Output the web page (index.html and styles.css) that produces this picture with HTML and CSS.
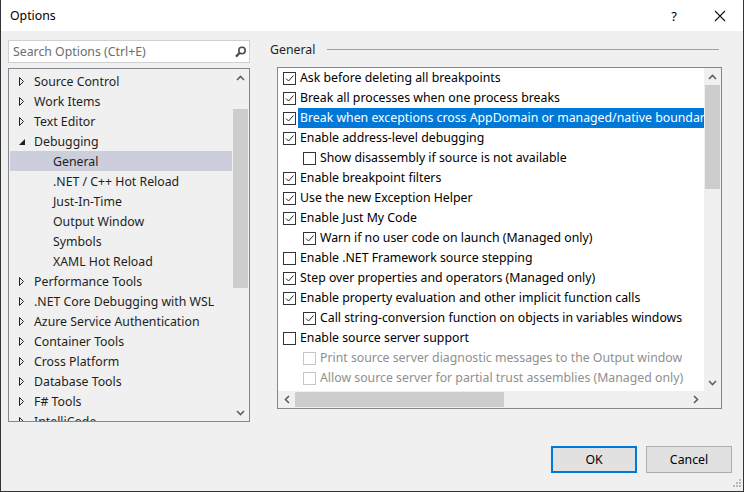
FILE: index.html
```html
<!DOCTYPE html>
<html lang="en">

<head>
    <meta charset="UTF-8">
    <title>Options</title>
    <link rel="stylesheet" href="styles.css">
</head>

<body>
    <div class="window">
        <div class="titlebar">
            <span class="title">Options</span>
            <div class="caption">
                <span class="help">?</span>
                <svg class="close" width="12" height="12" viewBox="0 0 12 12">
                    <path d="M1 1L11 11M11 1L1 11" stroke="#111" stroke-width="1.1" fill="none" />
                </svg>
            </div>
        </div>

        <div class="content">
            <div class="main">
                <div class="left">
                    <div class="search">
                        <span class="placeholder">Search Options (Ctrl+E)</span>
                        <svg width="14" height="12" viewBox="0 0 14 12">
                            <circle cx="9" cy="4.5" r="3.2" stroke="#4a4a4a" stroke-width="1.6" fill="none" />
                            <path d="M6.8 6.8L3 10.6" stroke="#4a4a4a" stroke-width="2.2" fill="none" />
                        </svg>
                    </div>
                    <div class="tree">
                        <div class="tree-items">
                            <div class="node"><span class="arrow"><svg width="6" height="9"><path d="M0.5 0.5L4.5 4.5L0.5 8.5Z" stroke="#1e1e1e" fill="none" /></svg></span>Source Control</div>
                            <div class="node"><span class="arrow"><svg width="6" height="9"><path d="M0.5 0.5L4.5 4.5L0.5 8.5Z" stroke="#1e1e1e" fill="none" /></svg></span>Work Items</div>
                            <div class="node"><span class="arrow"><svg width="6" height="9"><path d="M0.5 0.5L4.5 4.5L0.5 8.5Z" stroke="#1e1e1e" fill="none" /></svg></span>Text Editor</div>
                            <div class="node"><span class="arrow"><svg width="6" height="9"><path d="M6 2L6 8L0 8Z" fill="#1e1e1e" /></svg></span>Debugging</div>
                            <div class="node child selected">General</div>
                            <div class="node child">.NET / C++ Hot Reload</div>
                            <div class="node child">Just-In-Time</div>
                            <div class="node child">Output Window</div>
                            <div class="node child">Symbols</div>
                            <div class="node child">XAML Hot Reload</div>
                            <div class="node"><span class="arrow"><svg width="6" height="9"><path d="M0.5 0.5L4.5 4.5L0.5 8.5Z" stroke="#1e1e1e" fill="none" /></svg></span>Performance Tools</div>
                            <div class="node"><span class="arrow"><svg width="6" height="9"><path d="M0.5 0.5L4.5 4.5L0.5 8.5Z" stroke="#1e1e1e" fill="none" /></svg></span>.NET Core Debugging with WSL</div>
                            <div class="node"><span class="arrow"><svg width="6" height="9"><path d="M0.5 0.5L4.5 4.5L0.5 8.5Z" stroke="#1e1e1e" fill="none" /></svg></span>Azure Service Authentication</div>
                            <div class="node"><span class="arrow"><svg width="6" height="9"><path d="M0.5 0.5L4.5 4.5L0.5 8.5Z" stroke="#1e1e1e" fill="none" /></svg></span>Container Tools</div>
                            <div class="node"><span class="arrow"><svg width="6" height="9"><path d="M0.5 0.5L4.5 4.5L0.5 8.5Z" stroke="#1e1e1e" fill="none" /></svg></span>Cross Platform</div>
                            <div class="node"><span class="arrow"><svg width="6" height="9"><path d="M0.5 0.5L4.5 4.5L0.5 8.5Z" stroke="#1e1e1e" fill="none" /></svg></span>Database Tools</div>
                            <div class="node"><span class="arrow"><svg width="6" height="9"><path d="M0.5 0.5L4.5 4.5L0.5 8.5Z" stroke="#1e1e1e" fill="none" /></svg></span>F# Tools</div>
                            <div class="node"><span class="arrow"><svg width="6" height="9"><path d="M0.5 0.5L4.5 4.5L0.5 8.5Z" stroke="#1e1e1e" fill="none" /></svg></span>IntelliCode</div>
                        </div>
                        <div class="vscroll tree-scroll">
                            <div class="sb-btn"><svg width="9" height="6"><path d="M1 5L4.5 1.5L8 5" stroke="#606060" stroke-width="1.6" fill="none" /></svg></div>
                            <div class="track"><div class="thumb"></div></div>
                            <div class="sb-btn"><svg width="9" height="6"><path d="M1 1L4.5 4.5L8 1" stroke="#606060" stroke-width="1.6" fill="none" /></svg></div>
                        </div>
                    </div>
                </div>

                <div class="right">
                    <div class="group-title">General</div>
                    <div class="listbox">
                        <div class="list-top">
                            <div class="rows">
                                <div class="row"><span class="cb on"><svg width="11" height="11"><path d="M2 5.5L4.5 8L9.5 2.5" stroke="#222" fill="none" /></svg></span><span class="label">Ask before deleting all breakpoints</span></div>
                                <div class="row"><span class="cb on"><svg width="11" height="11"><path d="M2 5.5L4.5 8L9.5 2.5" stroke="#222" fill="none" /></svg></span><span class="label">Break all processes when one process breaks</span></div>
                                <div class="row"><span class="cb on"><svg width="11" height="11"><path d="M2 5.5L4.5 8L9.5 2.5" stroke="#222" fill="none" /></svg></span><span class="label selected">Break when exceptions cross AppDomain or managed/native boundaries</span></div>
                                <div class="row"><span class="cb on"><svg width="11" height="11"><path d="M2 5.5L4.5 8L9.5 2.5" stroke="#222" fill="none" /></svg></span><span class="label">Enable address-level debugging</span></div>
                                <div class="row sub"><span class="cb"></span><span class="label">Show disassembly if source is not available</span></div>
                                <div class="row"><span class="cb on"><svg width="11" height="11"><path d="M2 5.5L4.5 8L9.5 2.5" stroke="#222" fill="none" /></svg></span><span class="label">Enable breakpoint filters</span></div>
                                <div class="row"><span class="cb on"><svg width="11" height="11"><path d="M2 5.5L4.5 8L9.5 2.5" stroke="#222" fill="none" /></svg></span><span class="label">Use the new Exception Helper</span></div>
                                <div class="row"><span class="cb on"><svg width="11" height="11"><path d="M2 5.5L4.5 8L9.5 2.5" stroke="#222" fill="none" /></svg></span><span class="label">Enable Just My Code</span></div>
                                <div class="row sub"><span class="cb on"><svg width="11" height="11"><path d="M2 5.5L4.5 8L9.5 2.5" stroke="#222" fill="none" /></svg></span><span class="label">Warn if no user code on launch (Managed only)</span></div>
                                <div class="row"><span class="cb"></span><span class="label">Enable .NET Framework source stepping</span></div>
                                <div class="row"><span class="cb on"><svg width="11" height="11"><path d="M2 5.5L4.5 8L9.5 2.5" stroke="#222" fill="none" /></svg></span><span class="label">Step over properties and operators (Managed only)</span></div>
                                <div class="row"><span class="cb on"><svg width="11" height="11"><path d="M2 5.5L4.5 8L9.5 2.5" stroke="#222" fill="none" /></svg></span><span class="label">Enable property evaluation and other implicit function calls</span></div>
                                <div class="row sub"><span class="cb on"><svg width="11" height="11"><path d="M2 5.5L4.5 8L9.5 2.5" stroke="#222" fill="none" /></svg></span><span class="label">Call string-conversion function on objects in variables windows</span></div>
                                <div class="row"><span class="cb"></span><span class="label">Enable source server support</span></div>
                                <div class="row sub disabled"><span class="cb"></span><span class="label">Print source server diagnostic messages to the Output window</span></div>
                                <div class="row sub disabled"><span class="cb"></span><span class="label">Allow source server for partial trust assemblies (Managed only)</span></div>
                            </div>
                            <div class="vscroll list-scroll">
                                <div class="sb-btn"><svg width="9" height="6"><path d="M1 5L4.5 1.5L8 5" stroke="#606060" stroke-width="1.6" fill="none" /></svg></div>
                                <div class="track"><div class="thumb"></div></div>
                                <div class="sb-btn"><svg width="9" height="6"><path d="M1 1L4.5 4.5L8 1" stroke="#606060" stroke-width="1.6" fill="none" /></svg></div>
                            </div>
                        </div>
                        <div class="list-bottom">
                            <div class="hscroll">
                                <div class="sb-btn"><svg width="6" height="9"><path d="M5 1L1.5 4.5L5 8" stroke="#606060" stroke-width="1.6" fill="none" /></svg></div>
                                <div class="track"><div class="thumb"></div></div>
                                <div class="sb-btn"><svg width="6" height="9"><path d="M1 1L4.5 4.5L1 8" stroke="#606060" stroke-width="1.6" fill="none" /></svg></div>
                            </div>
                            <div class="corner"></div>
                        </div>
                    </div>
                </div>
            </div>

            <div class="footer">
                <button class="btn default">OK</button>
                <button class="btn">Cancel</button>
            </div>
        </div>

        <svg class="grip" width="10" height="10" viewBox="0 0 10 10">
            <rect x="8" y="0" width="2" height="2" fill="#b8b8b8" />
            <rect x="5" y="3" width="2" height="2" fill="#b8b8b8" />
            <rect x="8" y="3" width="2" height="2" fill="#b8b8b8" />
            <rect x="2" y="6" width="2" height="2" fill="#b8b8b8" />
            <rect x="5" y="6" width="2" height="2" fill="#b8b8b8" />
            <rect x="8" y="6" width="2" height="2" fill="#b8b8b8" />
        </svg>
    </div>
</body>

</html>
```

FILE: styles.css
```css
* {
    box-sizing: border-box;
}

body {
    margin: 0;
    font-family: "Noto Sans", "Open Sans", sans-serif;
    font-size: 12.3px;
    color: #000;
}

.window {
    position: relative;
    width: 744px;
    height: 492px;
    background: #f0f0f0;
    border: 1px solid #333;
    border-top: none;
    display: flex;
    flex-direction: column;
}

.titlebar {
    height: 31px;
    background: #fff;
    display: flex;
    align-items: center;
    justify-content: space-between;
    padding-left: 9px;
}

.caption {
    display: flex;
    align-items: center;
}

.help {
    font-size: 13px;
    width: 46px;
    text-align: center;
}

.close {
    margin: 0 17px;
}

.content {
    flex: 1;
    display: flex;
    flex-direction: column;
    padding: 9px 0 0 7px;
}

.main {
    display: flex;
    height: 382px;
}

.left {
    width: 242px;
    flex: none;
    display: flex;
    flex-direction: column;
    gap: 5px;
}

.search {
    height: 23px;
    background: #fff;
    border: 1px solid #d0d0d0;
    display: flex;
    align-items: center;
    justify-content: space-between;
    padding: 0 2px 0 4px;
}

.placeholder {
    color: #6d6d6d;
}

.tree {
    flex: 1;
    background: #f0f0f0;
    border: 1px solid #828790;
    display: flex;
    overflow: hidden;
}

.tree-items {
    flex: 1;
    min-width: 0;
    padding: 2px 0 0 1px;
    overflow: hidden;
    color: #1e1e1e;
}

.node {
    height: 20px;
    display: flex;
    align-items: center;
    padding-left: 9px;
    white-space: nowrap;
}

.arrow {
    width: 15px;
    display: flex;
    align-items: center;
}

.node.child {
    padding-left: 43px;
}

.node.selected {
    background: #cccedb;
}

.vscroll {
    width: 17px;
    flex: none;
    display: flex;
    flex-direction: column;
    background: #f0f0f0;
}

.sb-btn {
    height: 17px;
    flex: none;
    display: flex;
    align-items: center;
    justify-content: center;
}

.vscroll .track {
    flex: 1;
    padding: 0 1px;
}

.vscroll .thumb {
    background: #cdcdcd;
}

.tree-scroll .thumb {
    margin-top: 23px;
    height: 179px;
}

.list-scroll .thumb {
    height: 104px;
}

.right {
    flex: 1;
    min-width: 0;
    display: flex;
    flex-direction: column;
    padding: 0 21px 0 20px;
}

.group-title {
    height: 18px;
    display: flex;
    align-items: center;
    color: #1e1e1e;
    margin-bottom: 9px;
}

.group-title::after {
    content: "";
    flex: 1;
    height: 1px;
    background: #a0a0a0;
    margin: 0 3px 0 12px;
}

.listbox {
    margin-left: 7px;
    height: 342px;
    border: 1px solid #828790;
    background: #fff;
    display: flex;
    flex-direction: column;
}

.list-top {
    flex: 1;
    display: flex;
    overflow: hidden;
}

.rows {
    flex: 1;
    min-width: 0;
    overflow: hidden;
}

.row {
    height: 20px;
    display: flex;
    align-items: center;
    padding-left: 5px;
    white-space: nowrap;
}

.row.sub {
    padding-left: 25px;
}

.cb {
    width: 13px;
    height: 13px;
    flex: none;
    border: 1px solid #333;
    background: #fff;
    display: flex;
}

.label {
    flex: 1;
    height: 20px;
    line-height: 20px;
    margin-left: 2px;
    padding-left: 2px;
    overflow: hidden;
}

.label.selected {
    background: #0078d7;
    color: #fff;
}

.disabled .cb {
    border-color: #c6c6c6;
}

.disabled .label {
    color: #8f8f8f;
}

.list-bottom {
    height: 17px;
    display: flex;
}

.hscroll {
    flex: 1;
    display: flex;
    background: #f0f0f0;
}

.hscroll .sb-btn {
    width: 17px;
}

.hscroll .track {
    flex: 1;
    padding: 1px 0;
}

.hscroll .thumb {
    width: 209px;
    height: 100%;
    background: #cdcdcd;
}

.corner {
    width: 17px;
    background: #f0f0f0;
}

.footer {
    display: flex;
    justify-content: flex-end;
    gap: 9px;
    padding: 24px 11px 0 0;
}

.btn {
    width: 86px;
    height: 27px;
    font-family: inherit;
    font-size: 12.3px;
    color: #000;
    background: #e1e1e1;
    border: 1px solid #adadad;
    padding: 0;
}

.btn.default {
    border: 2px solid #0078d7;
}

.grip {
    position: absolute;
    right: 2px;
    bottom: 2px;
}
```
